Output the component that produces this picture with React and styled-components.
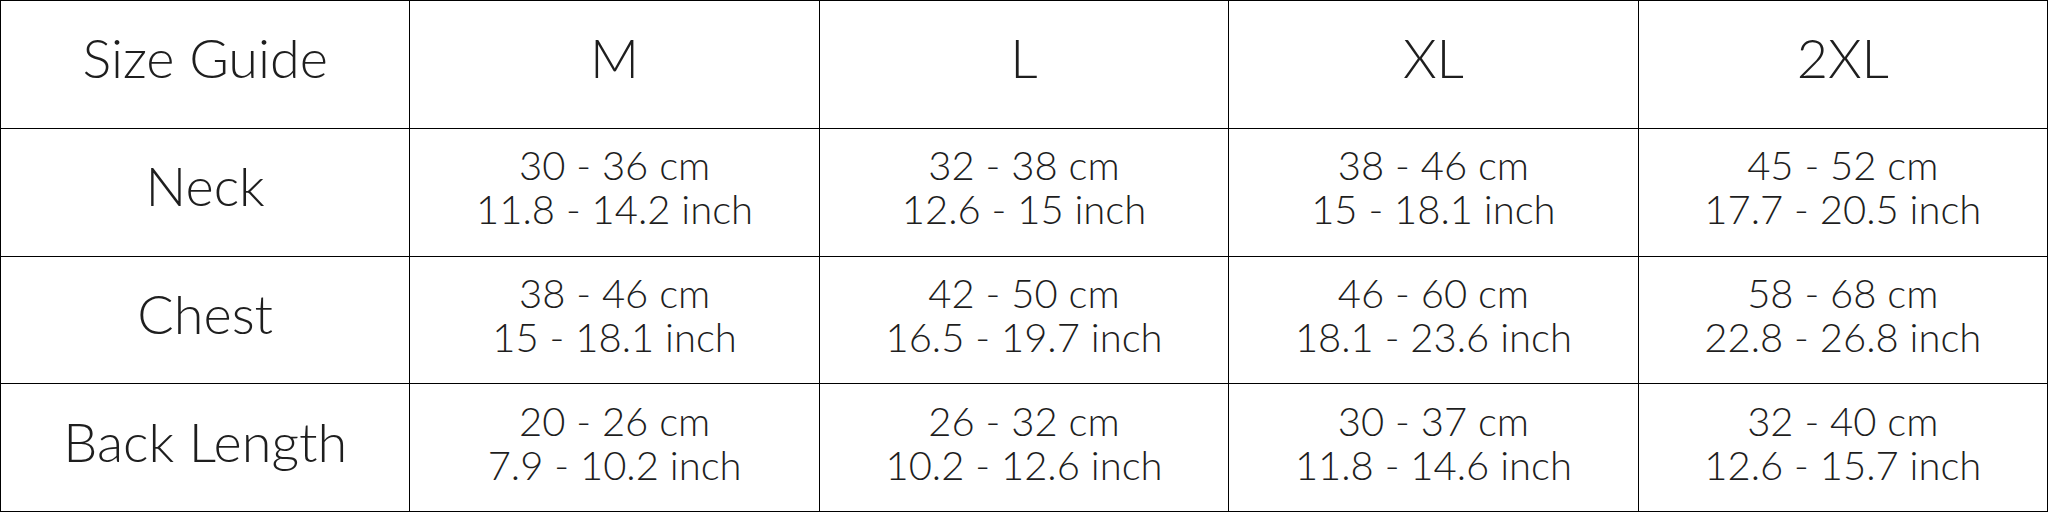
import styled, { createGlobalStyle } from "styled-components";

const GlobalStyle = createGlobalStyle`
  html, body {
    margin: 0;
    padding: 0;
    background: #ffffff;
  }
`;

const Grid = styled.div`
  display: grid;
  grid-template-columns: repeat(5, 1fr);
  grid-template-rows: repeat(4, 1fr);
  width: 2048px;
  height: 512px;
  box-sizing: border-box;
  border-top: 1px solid #000;
  border-left: 1px solid #000;
  font-family: Lato, "Open Sans", sans-serif;
  font-weight: 300;
  color: #1e1e1e;
`;

const Cell = styled.div`
  display: flex;
  flex-direction: column;
  align-items: center;
  justify-content: center;
  box-sizing: border-box;
  border-right: 1px solid #000;
  border-bottom: 1px solid #000;
  padding-bottom: ${(p) => (p.$head ? 12 : 10)}px;
  font-size: ${(p) => (p.$head ? 54 : 40)}px;
  line-height: ${(p) => (p.$head ? 1 : "44px")};
  white-space: nowrap;
`;

const sizes = ["M", "L", "XL", "2XL"];

const rows = [
  {
    label: "Neck",
    values: [
      ["30 - 36 cm", "11.8 - 14.2 inch"],
      ["32 - 38 cm", "12.6 - 15 inch"],
      ["38 - 46 cm", "15 - 18.1 inch"],
      ["45 - 52 cm", "17.7 - 20.5 inch"],
    ],
  },
  {
    label: "Chest",
    values: [
      ["38 - 46 cm", "15 - 18.1 inch"],
      ["42 - 50 cm", "16.5 - 19.7 inch"],
      ["46 - 60 cm", "18.1 - 23.6 inch"],
      ["58 - 68 cm", "22.8 - 26.8 inch"],
    ],
  },
  {
    label: "Back Length",
    values: [
      ["20 - 26 cm", "7.9 - 10.2 inch"],
      ["26 - 32 cm", "10.2 - 12.6 inch"],
      ["30 - 37 cm", "11.8 - 14.6 inch"],
      ["32 - 40 cm", "12.6 - 15.7 inch"],
    ],
  },
];

export default function App() {
  return (
    <>
      <GlobalStyle />
      <Grid>
        <Cell $head>Size Guide</Cell>
        {sizes.map((s) => (
          <Cell $head key={s}>
            {s}
          </Cell>
        ))}
        {rows.map((r) => [
          <Cell $head key={r.label}>
            {r.label}
          </Cell>,
          ...r.values.map(([cm, inch], i) => (
            <Cell key={r.label + i}>
              <span>{cm}</span>
              <span>{inch}</span>
            </Cell>
          )),
        ])}
      </Grid>
    </>
  );
}
